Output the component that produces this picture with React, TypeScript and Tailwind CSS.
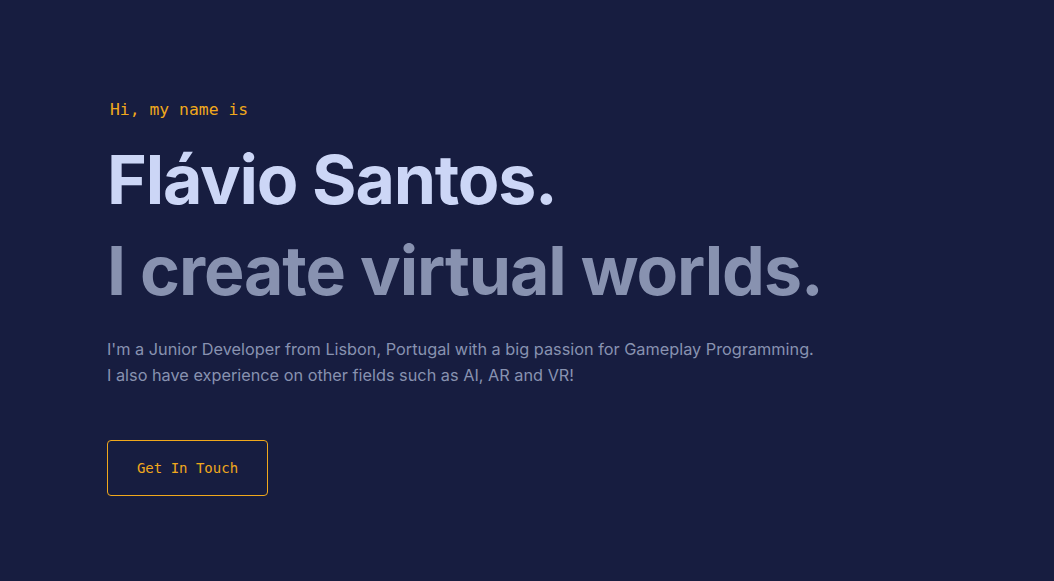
import React from 'react';

const mono = { fontFamily: '"DejaVu Sans Mono", "Liberation Mono", monospace' };

export default function App() {
  return (
    <main className="min-h-screen w-full bg-[#171d40] font-['Inter',sans-serif]">
      <section className="flex flex-col items-start px-[107px] pt-[98px]">
        <h1 className="ml-[3px] mb-[20px] text-[16.4px] leading-[24px] text-[#f0a81c]" style={mono}>
          Hi, my name is
        </h1>
        <h2 className="m-0 text-[68px] leading-[1.1] font-bold tracking-[-0.018em] text-[#ccd6f6]">
          Flávio Santos.
        </h2>
        <h3 className="m-0 mt-[19px] text-[68px] leading-[1] font-bold tracking-[-0.016em] text-[#8892b0]">
          I create virtual worlds.
        </h3>
        <p className="mt-[32px] max-w-[760px] text-[16.3px] leading-[26px] text-[#8892b0]">
          I'm a Junior Developer from Lisbon, Portugal with a big passion for Gameplay Programming.
          <br />
          I also have experience on other fields such as AI, AR and VR!
        </p>
        <a
          href="#contact"
          className="mt-[52px] inline-flex h-[56px] w-[161px] items-center justify-center rounded-[4px] border border-[#f0a81c] pt-[2px] text-[14px] text-[#f0a81c]"
          style={mono}
        >
          Get In Touch
        </a>
      </section>
    </main>
  );
}
